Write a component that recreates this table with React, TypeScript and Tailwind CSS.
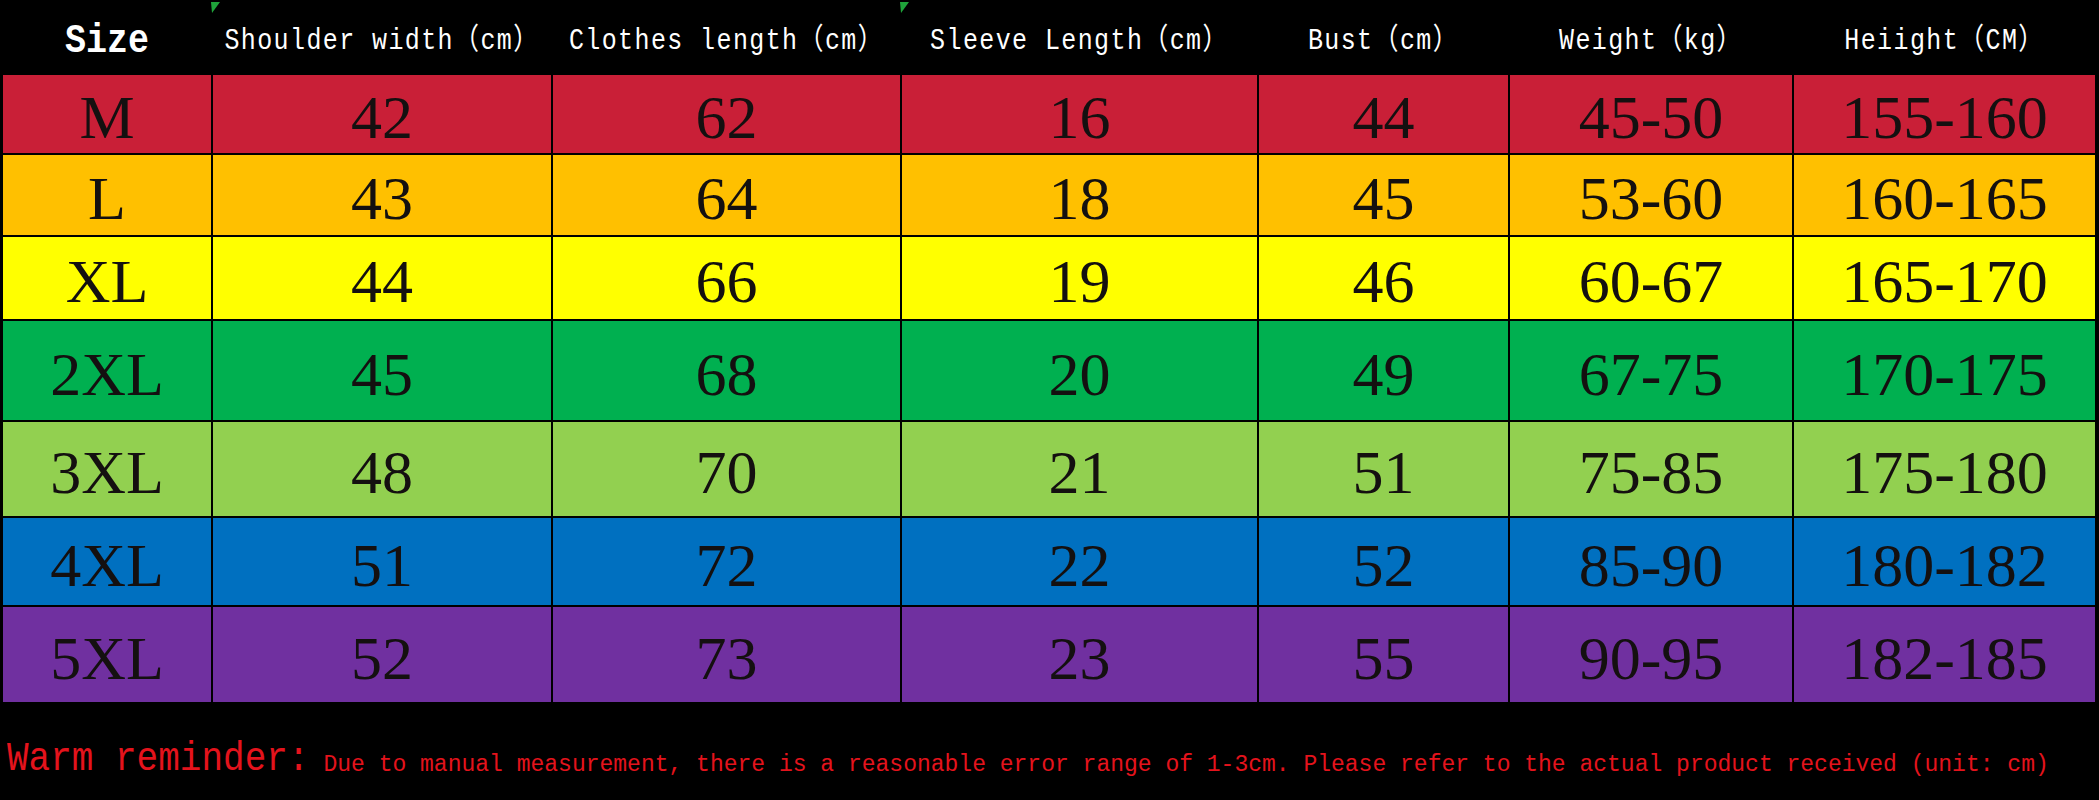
const headers = [
  'Size',
  'Shoulder width（cm）',
  'Clothes length（cm）',
  'Sleeve Length（cm）',
  'Bust（cm）',
  'Weight（kg）',
  'Heiight（CM）',
]

const rows = [
  { bg: 'bg-[#c91f37]', h: 'h-[78px]', cells: ['M', '42', '62', '16', '44', '45-50', '155-160'] },
  { bg: 'bg-[#ffc000]', h: 'h-[80px]', cells: ['L', '43', '64', '18', '45', '53-60', '160-165'] },
  { bg: 'bg-[#ffff00]', h: 'h-[82px]', cells: ['XL', '44', '66', '19', '46', '60-67', '165-170'] },
  { bg: 'bg-[#00b050]', h: 'h-[99px]', cells: ['2XL', '45', '68', '20', '49', '67-75', '170-175'] },
  { bg: 'bg-[#92d050]', h: 'h-[94px]', cells: ['3XL', '48', '70', '21', '51', '75-85', '175-180'] },
  { bg: 'bg-[#0070c0]', h: 'h-[87px]', cells: ['4XL', '51', '72', '22', '52', '85-90', '180-182'] },
  { bg: 'bg-[#7030a0]', h: 'h-[95px]', cells: ['5XL', '52', '73', '23', '55', '90-95', '182-185'] },
]

const grid = 'grid grid-cols-[208px_338px_347px_355px_249px_282px_301px] gap-x-[2px]'

function Marker({ className }: { className: string }) {
  return (
    <svg className={`absolute top-[2px] ${className}`} width="9" height="11" viewBox="0 0 9 11">
      <polygon points="0,0 9,0 1,11" fill="#1fa33a" />
    </svg>
  )
}

export default function App() {
  return (
    <div className="h-[800px] w-[2099px] overflow-hidden bg-black">
      <div className="w-[2092px] ml-[3px]">
        {/* header */}
        <div className={`${grid} relative h-[75px] text-white`} style={{ fontFamily: '"Liberation Mono", "Noto Sans CJK JP", monospace' }}>
          <Marker className="left-[208px]" />
          <Marker className="left-[897px]" />
          {headers.map((h, i) => (
            <div key={h} className={`flex items-center justify-center ${i === 0 ? 'pt-[10px]' : 'pt-[8px]'}`}>
              <span
                className={
                  i === 0
                    ? 'inline-block scale-y-[1.17] text-[35px] leading-none font-bold'
                    : 'inline-block scale-y-[1.2] text-[25px] leading-none tracking-[1.4px] whitespace-nowrap'
                }
              >
                {h}
              </span>
            </div>
          ))}
        </div>

        {/* body */}
        <div className="flex flex-col gap-y-[2px]" style={{ fontFamily: '"Liberation Serif", "Times New Roman", serif' }}>
          {rows.map((r) => (
            <div key={r.cells[0]} className={`${grid} ${r.h}`}>
              {r.cells.map((c, i) => (
                <div key={i} className={`${r.bg} flex items-center justify-center pt-[6px] text-[62px] leading-none text-[#141010]`}>
                  {c}
                </div>
              ))}
            </div>
          ))}
        </div>
      </div>

      {/* reminder */}
      <div
        className="flex items-baseline pl-[7px] pt-[42px] text-[#e4131c] whitespace-nowrap"
        style={{ fontFamily: '"Liberation Mono", "Noto Sans CJK JP", monospace' }}
      >
        <span className="inline-block origin-bottom scale-y-[1.15] text-[36px] leading-none">Warm reminder:</span>
        <span className="ml-[14px] text-[23px] leading-none">
          Due to manual measurement, there is a reasonable error range of 1-3cm. Please refer to the actual product received (unit: cm)
        </span>
      </div>
    </div>
  )
}
